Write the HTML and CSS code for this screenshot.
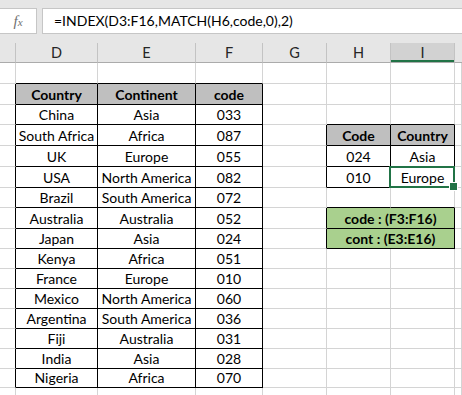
FILE: index.html
```html
<!DOCTYPE html>
<html>
<head>
<meta charset="utf-8">
<link rel="stylesheet" href="styles.css">
</head>
<body>
<div class="formula-bar">
  <div class="fx-box"><span class="fx">f<span class="fx-x">x</span></span></div>
  <div class="formula">=INDEX(D3:F16,MATCH(H6,code,0),2)</div>
</div>
<table class="sheet">
  <colgroup>
    <col class="w-c"><col class="w-d"><col class="w-e"><col class="w-f"><col class="w-g"><col class="w-h"><col class="w-i"><col class="w-j">
  </colgroup>
  <tr class="colhead"><th></th><th>D</th><th>E</th><th>F</th><th>G</th><th>H</th><th class="sel-col">I</th><th></th></tr>
  <tr class="h21"><td></td><td class="bb"></td><td class="bb"></td><td class="bb"></td><td></td><td></td><td></td><td></td></tr>
  <tr class="h21"><td class="br"></td><td class="t hd">Country</td><td class="t hd">Continent</td><td class="t hd">code</td><td></td><td></td><td></td><td></td></tr>
  <tr class="h20"><td class="br"></td><td class="t">China</td><td class="t">Asia</td><td class="t">033</td><td></td><td class="bb"></td><td class="bb"></td><td></td></tr>
  <tr class="h21"><td class="br"></td><td class="t">South Africa</td><td class="t">Africa</td><td class="t">087</td><td class="br"></td><td class="t hd">Code</td><td class="t hd">Country</td><td></td></tr>
  <tr class="h21"><td class="br"></td><td class="t">UK</td><td class="t">Europe</td><td class="t">055</td><td class="br"></td><td class="t">024</td><td class="t">Asia</td><td></td></tr>
  <tr class="h21"><td class="br"></td><td class="t">USA</td><td class="t">North America</td><td class="t">082</td><td class="br"></td><td class="t">010</td><td class="t sel">Europe</td><td></td></tr>
  <tr class="h20"><td class="br"></td><td class="t">Brazil</td><td class="t">South America</td><td class="t">072</td><td></td><td class="bb"></td><td class="bb"></td><td></td></tr>
  <tr class="h21"><td class="br"></td><td class="t">Australia</td><td class="t">Australia</td><td class="t">052</td><td class="br"></td><td class="t note" colspan="2">code : (F3:F16)</td><td></td></tr>
  <tr class="h20"><td class="br"></td><td class="t">Japan</td><td class="t">Asia</td><td class="t">024</td><td class="br"></td><td class="t note" colspan="2">cont : (E3:E16)</td><td></td></tr>
  <tr class="h20"><td class="br"></td><td class="t">Kenya</td><td class="t">Africa</td><td class="t">051</td><td></td><td></td><td></td><td></td></tr>
  <tr class="h20"><td class="br"></td><td class="t">France</td><td class="t">Europe</td><td class="t">010</td><td></td><td></td><td></td><td></td></tr>
  <tr class="h20"><td class="br"></td><td class="t">Mexico</td><td class="t">North America</td><td class="t">060</td><td></td><td></td><td></td><td></td></tr>
  <tr class="h20"><td class="br"></td><td class="t">Argentina</td><td class="t">South America</td><td class="t">036</td><td></td><td></td><td></td><td></td></tr>
  <tr class="h20"><td class="br"></td><td class="t">Fiji</td><td class="t">Australia</td><td class="t">031</td><td></td><td></td><td></td><td></td></tr>
  <tr class="h20"><td class="br"></td><td class="t">India</td><td class="t">Asia</td><td class="t">028</td><td></td><td></td><td></td><td></td></tr>
  <tr class="h19"><td class="br"></td><td class="t">Nigeria</td><td class="t">Africa</td><td class="t">070</td><td></td><td></td><td></td><td></td></tr>
  <tr class="h20"><td></td><td></td><td></td><td></td><td></td><td></td><td></td><td></td></tr>
</table>
</body>
</html>
```
FILE: styles.css
```css
* { box-sizing: border-box; }
html, body { margin: 0; padding: 0; background: #fff; }
body {
  width: 462px;
  height: 395px;
  overflow: hidden;
  font-family: Lato, "Liberation Sans", sans-serif;
  color: #000;
}
.formula-bar {
  display: flex;
  gap: 5px;
  height: 43px;
  padding: 8px 0 9px;
  background: #e6e6e6;
}
.fx-box {
  width: 37px;
  height: 26px;
  background: #fff;
  border: 1px solid #c6c6c6;
  border-left: 0;
  display: flex;
  align-items: center;
  justify-content: center;
}
.fx {
  font-family: "Liberation Serif", serif;
  font-style: italic;
  color: #707070;
  font-size: 15px;
  line-height: 1;
}
.fx-x { font-size: 11px; }
.formula {
  flex: 1;
  height: 26px;
  background: #fff;
  border: 1px solid #c6c6c6;
  border-right: 0;
  padding-left: 11px;
  font-size: 14px;
  line-height: 24px;
  white-space: nowrap;
}
.sheet {
  border-collapse: separate;
  border-spacing: 0;
  table-layout: fixed;
  width: 462px;
}
.w-c { width: 16px; }
.w-d { width: 82px; }
.w-e { width: 98px; }
.w-f { width: 67px; }
.w-g { width: 64px; }
.w-h { width: 64px; }
.w-i { width: 64px; }
.w-j { width: 7px; }
.sheet th, .sheet td {
  padding: 0;
  border-right: 1px solid #d4d4d4;
  border-bottom: 1px solid #d4d4d4;
  text-align: center;
  font-size: 14px;
  line-height: 18px;
  white-space: nowrap;
  overflow: hidden;
  vertical-align: bottom;
}
.colhead { height: 20px; }
.colhead th {
  background: #e6e6e6;
  border-right-color: #c3c3c3;
  border-bottom-color: #ababab;
  font-weight: normal;
  font-size: 14.5px;
  color: #262626;
  vertical-align: middle;
}
.colhead th:last-child { border-right: 0; }
.colhead th.sel-col {
  background: #d2d2d2;
  box-shadow: inset 0 -2px #217346;
}
.h21 { height: 21px; }
.h20 { height: 20px; }
.h19 { height: 19px; }
.sheet td.br { border-right-color: #000; }
.sheet td.bb { border-bottom-color: #000; }
.sheet td.t { border-right-color: #000; border-bottom-color: #000; }
.sheet td.hd { background: #bfbfbf; font-weight: bold; }
.sheet td.note { background: #a9d08e; font-weight: bold; }
.sheet td.sel { position: relative; overflow: visible; }
.sel::after {
  content: "";
  position: absolute;
  left: -2px;
  top: -1px;
  right: -1px;
  bottom: -1px;
  border: 2px solid #217346;
}
.sel::before {
  content: "";
  position: absolute;
  right: -4px;
  bottom: -4px;
  width: 7px;
  height: 7px;
  background: #217346;
  border: 1px solid #fff;
  z-index: 1;
}
```
